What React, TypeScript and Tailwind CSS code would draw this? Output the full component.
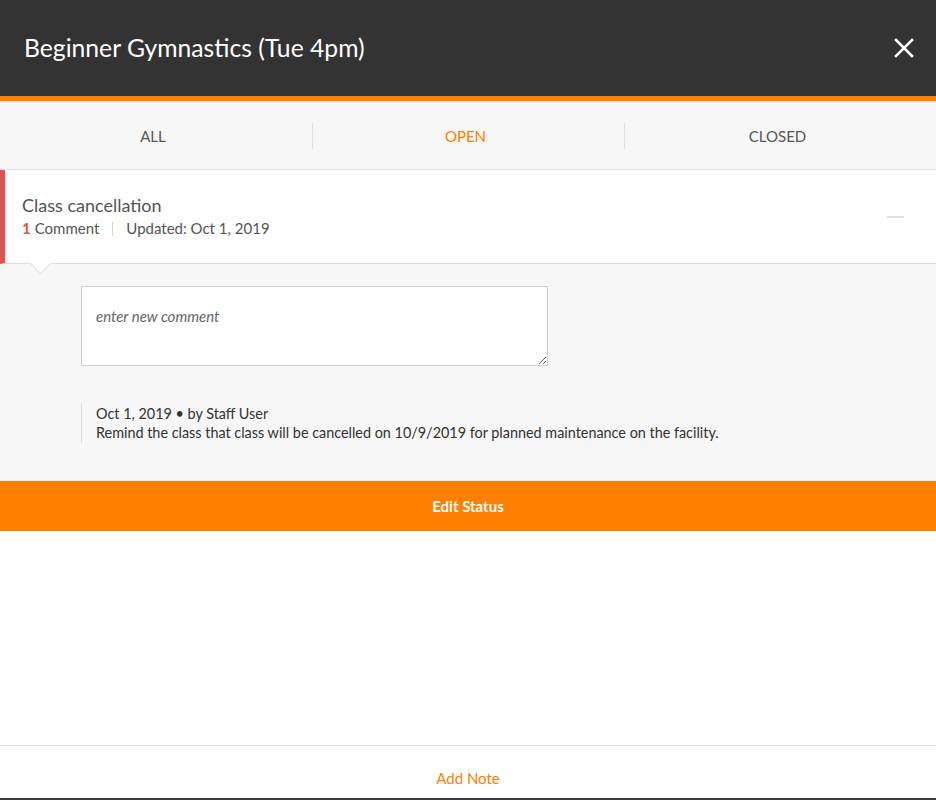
import React, { useState } from 'react';

const tabs = ['All', 'Open', 'Closed'];

export default function App() {
  const [active, setActive] = useState('Open');

  return (
    <div className="h-[800px] w-[936px] flex flex-col bg-white font-['Lato','Open_Sans',sans-serif] overflow-hidden">
      {/* header */}
      <div className="h-[96px] shrink-0 bg-[#333333] flex items-center justify-between pl-6 pr-[22px]">
        <h1 className="text-white text-[24.7px] leading-none">Beginner Gymnastics (Tue 4pm)</h1>
        <button className="w-5 h-5 flex items-center justify-center">
          <svg width="20" height="20" viewBox="0 0 20 20">
            <path d="M2 2 L18 18 M18 2 L2 18" stroke="#fff" strokeWidth="2.6" strokeLinecap="square" />
          </svg>
        </button>
      </div>
      <div className="h-[5px] shrink-0 bg-[#ff8000]" />
      <div className="h-px shrink-0 bg-[#ffd9b3]" />

      {/* tabs */}
      <div className="h-[68px] shrink-0 bg-[#f7f7f7] border-b border-[#e2e2e2] grid grid-cols-3 items-center">
        {tabs.map((t, i) => (
          <button
            key={t}
            onClick={() => setActive(t)}
            className={`h-[26px] flex items-center justify-center pr-[6px] pt-px uppercase text-[15px] ${i > 0 ? 'border-l border-[#e0e0e0]' : ''} ${active === t ? 'text-[#ff8000]' : 'text-[#555]'}`}
          >
            {t}
          </button>
        ))}
      </div>

      {/* ticket card */}
      <div className="relative shrink-0 h-[94px] bg-white border-b border-[#dedede] border-l-[5px] border-l-[#e0524f] flex items-center justify-between pl-[17px] pr-8">
        <div>
          <div className="text-[18px] text-[#555] leading-[22px] pt-px">Class cancellation</div>
          <div className="flex items-center text-[15px] text-[#555] mt-px">
            <span className="text-[#e0524f] font-bold mr-1">1</span>
            <span>Comment</span>
            <span className="mx-[13px] h-[14px] w-px bg-[#d5d5d5]" />
            <span>Updated: Oct 1, 2019</span>
          </div>
        </div>
        <div className="w-[17px] h-[2px] bg-[#e0e0e0]" />
        <div className="absolute left-[28px] -bottom-[8px] w-[15px] h-[15px] bg-white border-r border-b border-[#dedede] rotate-45" />
      </div>

      {/* expanded body */}
      <div className="shrink-0 bg-[#f7f7f7] pt-[22px] pb-[38px] pl-[81px]">
        <textarea
          placeholder="enter new comment"
          className="block w-[467px] h-[80px] bg-white border border-[#cfcfcf] px-[14px] py-[18px] text-[15px] italic text-[#555] placeholder:text-[#666] outline-none"
        />
        <div className="mt-[37px] border-l border-[#dcdcdc] pl-[14px] py-[1px] text-[#333] text-[14.4px] leading-[19px]">
          <div>Oct 1, 2019 • by Staff User</div>
          <div>
            Remind the class that class will be cancelled on 10/9/2019 for planned maintenance on the facility.
          </div>
        </div>
      </div>

      <button className="shrink-0 h-[50px] bg-[#ff7f00] text-white font-bold text-[15px]">Edit Status</button>

      <div className="flex-1" />

      {/* footer */}
      <div className="shrink-0 h-[53px] border-t border-[#dddddd] flex justify-center pt-[11px]">
        <button className="text-[#ff8000] text-[15px] leading-[20px]">Add Note</button>
      </div>
      <div className="h-[2px] shrink-0 bg-[#3a3a3a]" />
    </div>
  );
}
